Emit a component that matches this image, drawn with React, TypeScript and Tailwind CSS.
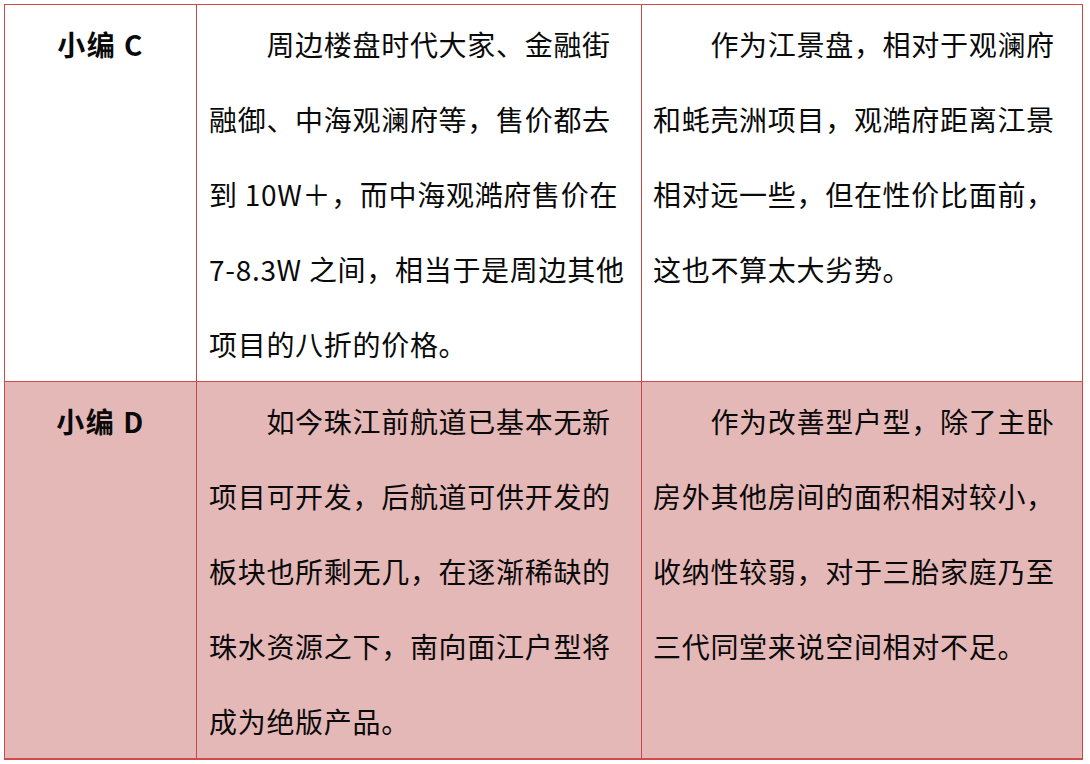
import React from "react";

const font = { fontFamily: '"Noto Sans CJK SC", "Noto Sans", sans-serif' };

function Lines({ lines }: { lines: string[] }) {
  return (
    <div className="pt-[2px] text-[28px] leading-[75px] tracking-[0.7px] text-[#0a0a0a] whitespace-nowrap">
      {lines.map((l, i) => (
        <div key={i}>{l}</div>
      ))}
    </div>
  );
}

export default function App() {
  const rows = [
    {
      name: "小编 C",
      bg: "bg-white",
      a: [
        "\u3000\u3000周边楼盘时代大家、金融街",
        "融御、中海观澜府等，售价都去",
        "到 10W＋，而中海观澔府售价在",
        "7-8.3W 之间，相当于是周边其他",
        "项目的八折的价格。",
      ],
      b: [
        "\u3000\u3000作为江景盘，相对于观澜府",
        "和蚝壳洲项目，观澔府距离江景",
        "相对远一些，但在性价比面前，",
        "这也不算太大劣势。",
      ],
      h: "h-[377px]",
      border: "border-b",
    },
    {
      name: "小编 D",
      bg: "bg-[#e5b8b8]",
      a: [
        "\u3000\u3000如今珠江前航道已基本无新",
        "项目可开发，后航道可供开发的",
        "板块也所剩无几，在逐渐稀缺的",
        "珠水资源之下，南向面江户型将",
        "成为绝版产品。",
      ],
      b: [
        "\u3000\u3000作为改善型户型，除了主卧",
        "房外其他房间的面积相对较小，",
        "收纳性较弱，对于三胎家庭乃至",
        "三代同堂来说空间相对不足。",
      ],
      h: "h-[378px]",
      border: "border-b-2",
    },
  ];
  return (
    <div className="w-[1090px] h-[764px] bg-white pt-[4px] pl-[4px]" style={font}>
      <div className="w-[1079px] border-l border-t border-[#cf4a4a]">
        {rows.map((r, i) => (
          <div key={i} className={`flex ${r.bg} ${r.h} ${r.border} border-[#cf4a4a]`}>
            <div className="w-[192px] border-r border-[#c84646] pt-[2px] flex justify-center">
              <div className="text-[28px] leading-[75px] font-bold tracking-[1.5px] text-[#0a0a0a] whitespace-pre">{r.name}</div>
            </div>
            <div className="w-[445px] border-r border-[#c84646] pl-[12px]">
              <Lines lines={r.a} />
            </div>
            <div className="w-[441px] border-r border-[#c84646] pl-[11px]">
              <Lines lines={r.b} />
            </div>
          </div>
        ))}
      </div>
    </div>
  );
}
